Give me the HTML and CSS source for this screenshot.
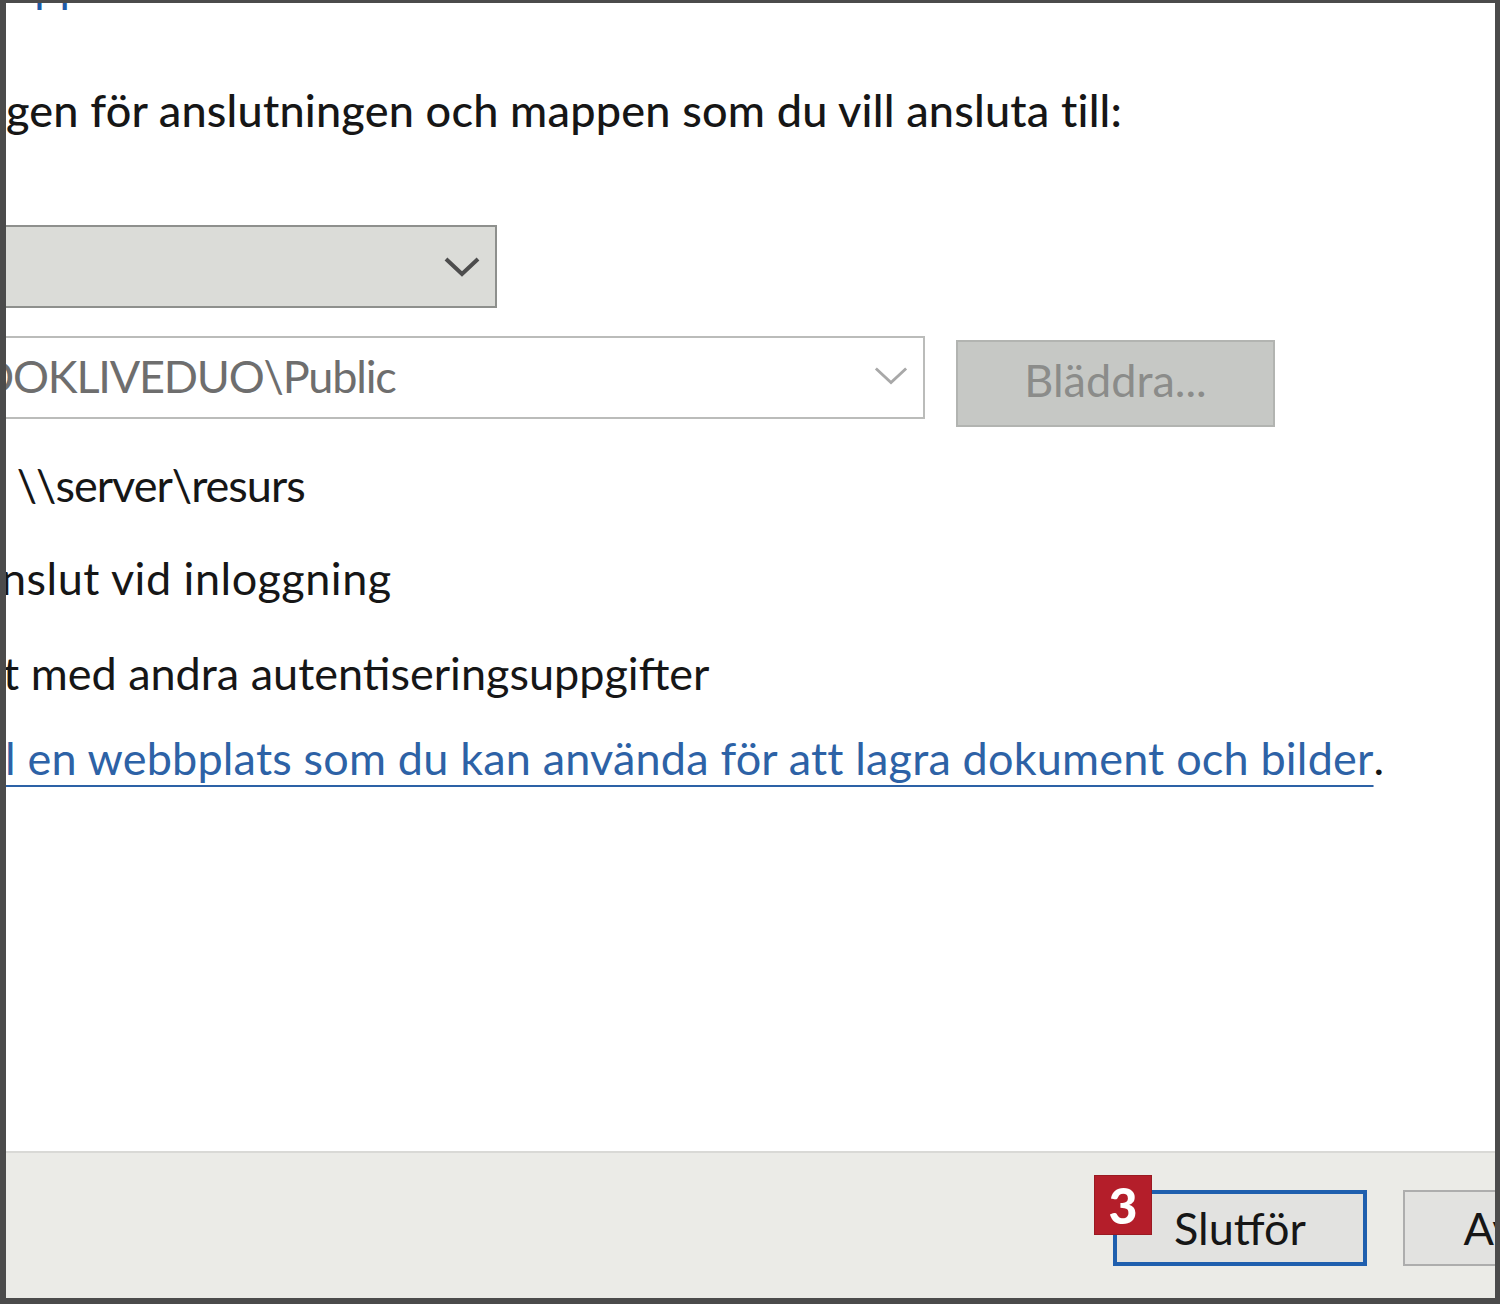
FILE: index.html
```html
<!DOCTYPE html>
<html lang="sv">
<head>
    <meta charset="UTF-8">
    <title>Anslut nätverksenhet</title>
    <link rel="stylesheet" href="styles.css">
</head>
<body>
<div class="window">
    <div class="content">
        <div class="heading">app</div>
        <p class="intro">gen för anslutningen och mappen som du vill ansluta till:</p>

        <div class="select select-drive">
            <span class="select-value"></span>
            <svg class="chevron" viewBox="0 0 36 20" width="36" height="20">
                <polyline points="2,2 18,17 34,2" fill="none" stroke="currentColor" stroke-width="4"/>
            </svg>
        </div>

        <div class="folder-row">
            <div class="select select-folder">
                <span class="select-value folder-path">DOKLIVEDUO\Public</span>
                <svg class="chevron" viewBox="0 0 36 20" width="34" height="20">
                    <polyline points="2,2 18,17 34,2" fill="none" stroke="currentColor" stroke-width="3"/>
                </svg>
            </div>
            <button class="btn btn-browse" disabled>Bläddra...</button>
        </div>

        <p class="line example">: \\server\resurs</p>
        <p class="line reconnect">nslut vid inloggning</p>
        <p class="line creds">t med andra autentiseringsuppgifter</p>
        <p class="line link-line"><a href="#">l en webbplats som du kan använda för att lagra dokument och bilder</a>.</p>
    </div>

    <div class="footer">
        <div class="footer-buttons">
            <div class="btn-wrap">
                <span class="badge">3</span>
                <button class="btn btn-primary">Slutför</button>
            </div>
            <button class="btn">Avbryt</button>
        </div>
    </div>
</div>
</body>
</html>
```

FILE: styles.css
```css
body {
    margin: 0;
    font-family: Lato, 'Open Sans', sans-serif;
    background: #fff;
}
.window {
    width: 1500px;
    height: 1304px;
    box-sizing: border-box;
    border-style: solid;
    border-color: #4b4b4b;
    border-width: 3px 5px 6px 6px;
    display: flex;
    flex-direction: column;
    overflow: hidden;
    background: #fff;
}
.content {
    flex: 1;
    font-size: 45px;
    line-height: 50px;
    color: #161616;
}
.heading {
    margin-top: -43px;
    height: 50px;
    padding-left: 6px;
    color: #1e5aa8;
}
.intro {
    margin: 75px 0 0 0;
    white-space: nowrap;
    font-weight: 500;
    letter-spacing: 0.2px;
}
.select {
    box-sizing: border-box;
    height: 83px;
    margin-left: -40px;
    display: flex;
    align-items: center;
    justify-content: space-between;
    padding-right: 15px;
    border: 2px solid;
}
.select-drive {
    width: 531px;
    margin-top: 90px;
    background: #dbdcd8;
    border-color: #8e908d;
    color: #4d4d4d;
}
.folder-row {
    display: flex;
    align-items: flex-start;
    gap: 31px;
    margin-top: 28px;
}
.select-folder {
    width: 959px;
    padding-bottom: 4px;
    background: #fff;
    border-color: #bbbcba;
    color: #a8a8a8;
}
.folder-path {
    margin-left: 12px;
    color: #6e6e6e;
    white-space: nowrap;
    letter-spacing: -1.2px;
}
.chevron {
    flex-shrink: 0;
}
.btn {
    box-sizing: border-box;
    width: 254px;
    height: 76px;
    font-family: inherit;
    font-size: 45px;
    line-height: 50px;
    color: #161616;
    background: #e2e2e0;
    border: 2px solid #adadad;
    padding: 0;
}
.btn-browse {
    width: 319px;
    height: 87px;
    margin-top: 4px;
    padding-bottom: 7px;
    background: #c6c8c5;
    border-color: #b2b4b1;
    color: #8b8c8a;
}
.line {
    margin: 0;
    white-space: nowrap;
}
.example {
    margin: 33px 0 0 -10px;
    letter-spacing: -1px;
}
.reconnect {
    margin: 43px 0 0 -5px;
    letter-spacing: 0.5px;
}
.creds {
    margin: 45px 0 0 -3px;
}
.link-line {
    margin: 35px 0 0 -1px;
}
.link-line a {
    color: #2d62a6;
    text-decoration: underline;
    text-decoration-thickness: 2px;
    text-underline-offset: 10px;
    letter-spacing: 0.18px;
}
.footer {
    height: 147px;
    box-sizing: border-box;
    border-top: 2px solid #d9d9d6;
    background: #ebebe7;
    padding-top: 37px;
    display: flex;
    justify-content: flex-end;
}
.footer-buttons {
    display: flex;
    gap: 36px;
    margin-right: -162px;
}
.btn-wrap {
    position: relative;
}
.btn-primary {
    border: 4px solid #1f5fae;
}
.badge {
    position: absolute;
    left: -19px;
    top: -15px;
    width: 58px;
    height: 60px;
    box-sizing: border-box;
    border: 1px solid #9a1a22;
    background: #b41e2a;
    color: #fff;
    font-size: 50px;
    font-weight: 900;
    line-height: 58px;
    text-align: center;
    z-index: 1;
}
```
